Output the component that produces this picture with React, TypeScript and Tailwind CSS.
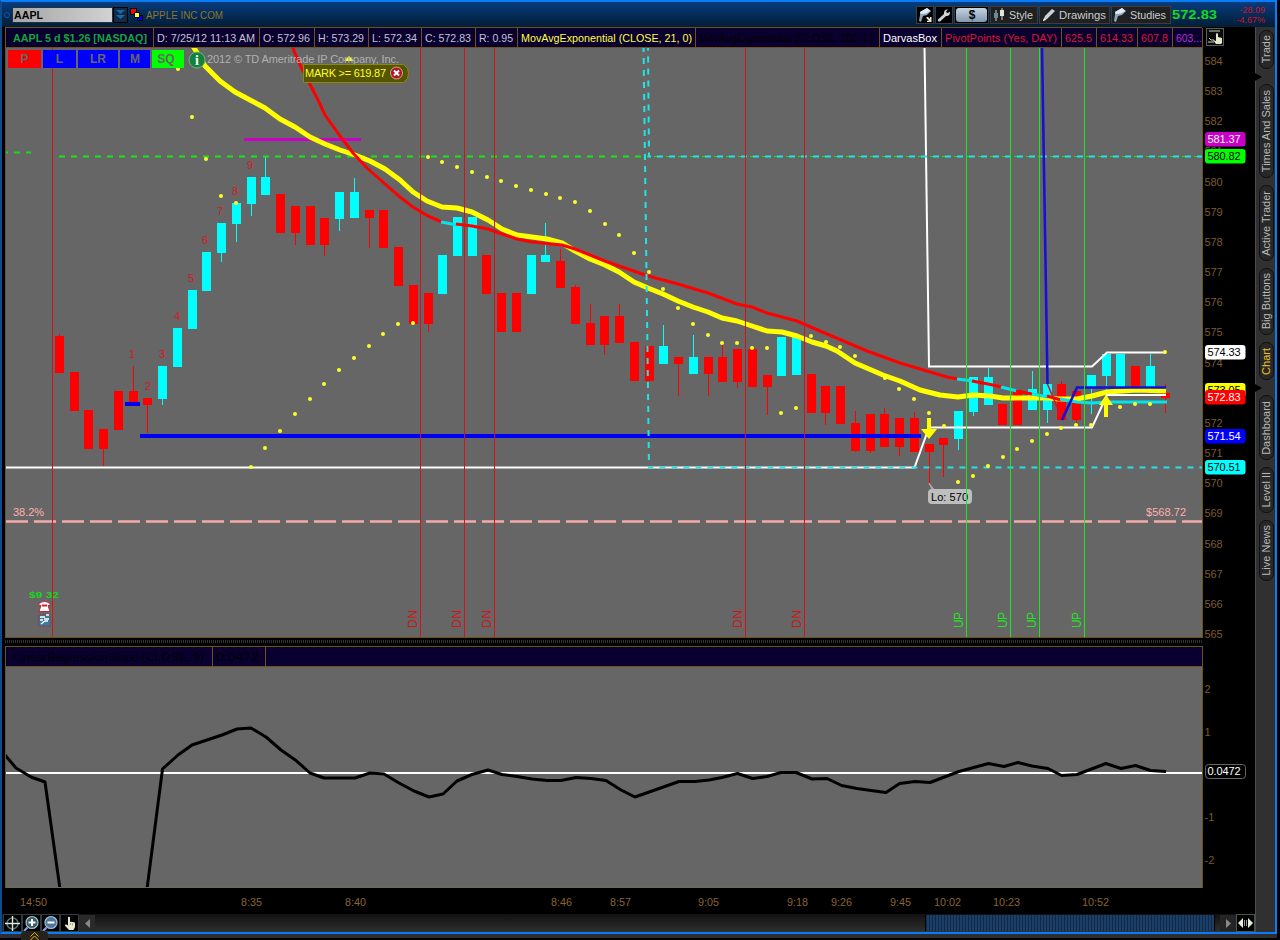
import type { ReactNode } from 'react';

type Point = [number, number];
// [direction, open/close top, open/close bottom, high, low]
type Candle = ['u' | 'd', number, number, number?, number?];

const CANDLES: Candle[] = [
  ['d', 336, 373, 334], ['d', 372, 411], ['d', 410, 449], ['d', 429, 449, 429, 466], ['d', 391, 430],
  ['d', 391, 402, 366], ['d', 398, 405, 398, 433], ['u', 366, 399, 366, 405], ['u', 328, 367], ['u', 290, 329],
  ['u', 252, 291], ['u', 223, 253, 223, 262], ['u', 203, 224, 203, 242], ['u', 177, 204, 177, 216], ['u', 177, 195, 157],
  ['d', 194, 233], ['d', 206, 233, 206, 245], ['d', 206, 245], ['d', 218, 245, 218, 256], ['u', 192, 219, 192, 231],
  ['u', 192, 218, 178], ['d', 210, 218, 210, 248], ['d', 210, 248], ['d', 247, 286], ['d', 285, 324],
  ['d', 293, 324, 293, 332], ['u', 255, 294], ['u', 217, 256], ['u', 217, 256], ['d', 255, 294],
  ['d', 293, 332], ['d', 293, 332], ['u', 255, 294], ['u', 255, 262, 223], ['d', 261, 288, 249],
  ['d', 287, 324, 285], ['d', 323, 345, 304], ['d', 316, 345, 316, 355], ['d', 316, 343, 304], ['d', 342, 381],
  ['d', 346, 381], ['u', 346, 364, 325], ['d', 357, 364, 357, 396], ['u', 357, 374, 335], ['d', 357, 374, 357, 396],
  ['d', 357, 382, 345], ['d', 349, 382, 349, 388], ['d', 349, 387], ['d', 375, 387, 375, 415], ['u', 337, 376],
  ['u', 337, 375], ['d', 374, 413], ['d', 386, 413, 386, 425], ['d', 386, 424], ['d', 423, 451, 411, 452],
  ['d', 414, 451, 414, 453], ['d', 414, 447, 408], ['d', 418, 447, 418, 456], ['d', 418, 452, 412], ['d', 444, 452, 444, 483],
  ['d', 438, 445, 438, 477], ['u', 411, 439, 411, 450], ['u', 377, 412, 377, 416], ['u', 377, 405, 368], ['d', 404, 425],
  ['d', 390, 425], ['u', 389, 410, 371], ['u', 384, 410, 384, 423], ['d', 384, 420, 381], ['d', 391, 420, 391, 423],
  ['u', 375, 387, 375, 414], ['u', 354, 376, 354, 395], ['u', 354, 387], ['d', 366, 387], ['u', 366, 387, 354],
  ['d', 393, 398, 384, 413],
];

const EMA_FAST: Point[] = [
  [193, 46], [205, 66], [220, 81], [235, 92], [250, 100], [265, 108], [280, 119], [295, 127], [310, 137], [325, 144],
  [340, 150], [355, 155], [370, 161], [385, 169], [400, 180], [413, 192], [427, 201], [442, 207], [457, 208], [472, 212],
  [488, 220], [502, 229], [517, 235], [547, 239], [562, 243], [575, 251], [590, 259], [605, 265], [619, 272], [634, 282],
  [648, 288], [663, 294], [678, 301], [693, 307], [708, 312], [722, 318], [737, 321], [752, 326], [767, 331], [782, 332],
  [797, 336], [812, 342], [826, 346], [837, 351], [855, 363], [883, 375], [900, 381], [920, 390], [940, 395], [958, 397],
  [973, 395], [990, 396], [1003, 398], [1033, 398], [1047, 398], [1060, 399], [1077, 399], [1092, 396], [1107, 392],
  [1137, 390], [1166, 391],
];

const EMA_SLOW: { color: string; points: Point[] }[] = [
  { color: '#f00', points: [[292, 46], [300, 65], [318, 100], [325, 115], [340, 136], [353, 153], [367, 168], [385, 184], [400, 197], [413, 207], [428, 216], [442, 222]] },
  { color: '#00e6ee', points: [[441, 222], [457, 225]] },
  { color: '#f00', points: [[456, 224], [472, 226], [488, 229], [502, 234], [517, 239], [532, 242], [562, 245], [575, 249], [605, 261], [619, 266], [648, 276], [678, 284], [708, 293], [737, 304], [752, 307], [767, 313], [797, 321], [820, 331], [867, 351], [900, 363], [947, 377], [958, 379]] },
  { color: '#00e6ee', points: [[957, 379], [973, 381]] },
  { color: '#f00', points: [[972, 381], [988, 384], [1002, 387]] },
  { color: '#00e6ee', points: [[1001, 387], [1017, 391]] },
  { color: '#f00', points: [[1016, 391], [1032, 394]] },
  { color: '#00e6ee', points: [[1032, 394], [1048, 397]] },
  { color: '#f00', points: [[1047, 396], [1061, 400]] },
  { color: '#00e6ee', points: [[1060, 399], [1077, 402], [1092, 403], [1107, 402], [1167, 402]] },
];

const SAR: Point[] = [
  [178, 69], [192, 117], [206, 159], [221, 196], [236, 203], [251, 467], [265, 448], [280, 431], [295, 414], [310, 399],
  [324, 384], [339, 370], [354, 358], [369, 346], [383, 334], [398, 324], [413, 323], [428, 157], [442, 162], [457, 167],
  [472, 172], [487, 177], [501, 181], [516, 186], [531, 190], [546, 194], [560, 198], [575, 202], [590, 211], [605, 224],
  [619, 235], [634, 253], [649, 272], [663, 289], [678, 308], [693, 324], [708, 335], [722, 343], [737, 343], [752, 348],
  [767, 348], [781, 413], [796, 408], [811, 336], [826, 342], [840, 347], [855, 356], [885, 378], [899, 389], [914, 399],
  [929, 413], [944, 426], [958, 482], [973, 476], [988, 466], [1003, 457], [1017, 449], [1032, 441], [1047, 434],
  [1061, 428], [1076, 425], [1091, 425], [1120, 407], [1135, 404], [1150, 404], [1165, 352],
];

const COUNTS: Point[] = [[132, 354], [148, 386], [162, 354], [177, 316], [191, 278], [205, 240], [220, 211], [235, 191], [250, 165]];

const OSCILLATOR: Point[] = [
  [5, 755], [16, 768], [31, 777], [45, 782], [60, 889], [147, 889], [162.5, 769], [178, 755], [192, 745], [207, 740],
  [222, 735], [237, 729], [251, 728], [266, 737], [281, 750], [296, 760.5], [310, 773], [324, 778], [355, 778], [370, 773],
  [384, 774], [399, 783], [414, 791], [429, 797], [443, 794], [457, 781], [472, 774.5], [488, 770], [502, 774.5], [517, 776.5],
  [532, 779], [547, 780.5], [561, 780.5], [576, 777.5], [591, 778.5], [606, 780.5], [621, 790], [635, 797], [679, 781.5],
  [695, 781.5], [709, 780], [722, 777.5], [737.5, 773.5], [752.6, 778.5], [767, 776.5], [781, 772.5], [796, 772.5],
  [812, 779], [827, 778.5], [841.6, 785.5], [857, 788.5], [871, 790.5], [886, 792.5], [899.6, 783.5], [915, 781.5],
  [930, 782.5], [959, 771.5], [988.5, 763.5], [1004, 766.5], [1018, 762.5], [1032, 766], [1048, 768.5], [1061.6, 775.5],
  [1077, 774.5], [1106, 763.5], [1121, 768.5], [1135.5, 765.5], [1150.6, 770.5], [1166, 771.5],
];

const DOWN_LINES = [420.5, 464.5, 494.5, 745.5, 804.5];
const UP_LINES = [966.5, 1010.5, 1039.5, 1084.5];

const INFO_CELLS = [
  { text: 'AAPL 5 d $1.26 [NASDAQ]', className: 'w-[148px] pl-[7px] font-bold text-[#12a53c]', length: 134 },
  { text: 'D: 7/25/12 11:13 AM', className: 'w-[106px] text-[#c3c3d6]', length: 98 },
  { text: 'O: 572.96', className: 'w-[55px] text-[#c3c3d6]', length: 47 },
  { text: 'H: 573.29', className: 'w-[54px] text-[#c3c3d6]', length: 46 },
  { text: 'L: 572.34', className: 'w-[53px] text-[#c3c3d6]', length: 45 },
  { text: 'C: 572.83', className: 'w-[54px] text-[#c3c3d6]', length: 46 },
  { text: 'R: 0.95', className: 'w-[42px] text-[#c3c3d6]', length: 34 },
  { text: 'MovAvgExponential (CLOSE, 21, 0)', className: 'w-[178px] text-[#ffff3c]', length: 171 },
  { text: 'MovAvgExponential (CLOSE, 200, 0)', className: 'w-[184px] text-black', length: 174 },
  { text: 'DarvasBox', className: 'w-[62px] text-white', length: 54 },
  { text: 'PivotPoints (Yes, DAY)', className: 'w-[120px] text-[#d6182f]', length: 112 },
  { text: '625.5', className: 'w-[35px] text-[#d6182f]', length: 27 },
  { text: '614.33', className: 'w-[41px] text-[#d6182f]', length: 33 },
  { text: '607.8', className: 'w-[35px] text-[#d6182f]', length: 27 },
  { text: '603...', className: 'w-[30px] text-[#b32fd0]', length: 26 },
];

const PRICE_TAGS = [
  { y: 139, text: '581.37', fill: '#c800c8', color: '#fff' },
  { y: 156, text: '580.82', fill: '#00ff00', color: '#000' },
  { y: 352, text: '574.33', fill: '#fff', color: '#000' },
  { y: 390, text: '573.05', fill: '#ffff00', color: '#000' },
  { y: 397, text: '572.83', fill: '#ff0000', color: '#fff' },
  { y: 436, text: '571.54', fill: '#0000ff', color: '#fff' },
  { y: 467, text: '570.51', fill: '#00ffff', color: '#000' },
];

const TIMES: { x: number; text: string }[] = [
  { x: 20, text: '14:50' }, { x: 241, text: '8:35' }, { x: 345, text: '8:40' }, { x: 551, text: '8:46' }, { x: 610, text: '8:57' },
  { x: 698, text: '9:05' }, { x: 787, text: '9:18' }, { x: 831, text: '9:26' }, { x: 890, text: '9:45' }, { x: 934, text: '10:02' },
  { x: 993, text: '10:23' }, { x: 1082, text: '10:52' },
];

const SIDE_TABS = [
  { label: 'Trade', className: 'mt-[3px] h-[39px] text-[#b9b9b9]' },
  { label: 'Times And Sales', className: 'mt-[15px] h-[94px] text-[#b9b9b9]' },
  { label: 'Active Trader', className: 'mt-[7px] h-[76px] text-[#b9b9b9]' },
  { label: 'Big Buttons', className: 'mt-[7px] h-[67px] text-[#b9b9b9]' },
  { label: 'Chart', className: 'mt-[7px] h-[38px] text-[#f0c020]' },
  { label: 'Dashboard', className: 'mt-[15px] h-[65px] text-[#b9b9b9]' },
  { label: 'Level II', className: 'mt-[7px] h-[46px] text-[#b9b9b9]' },
  { label: 'Live News', className: 'mt-[7px] h-[61px] text-[#b9b9b9]' },
];

const toPoints = (points: Point[]) => points.map((p) => p.join(',')).join(' ');

// Single line of text that always takes the given width
const FitText = ({ text, length }: { text: string; length: number }) => (
  <svg width={length} height="14" className="block shrink-0 overflow-visible">
    <text x="0" y="11" textLength={length} lengthAdjust="spacingAndGlyphs" fill="currentColor">{text}</text>
  </svg>
);

const FunnelIcon = ({ arrow }: { arrow?: boolean }) => (
  <svg width="14" height="16" viewBox="0 0 14 16">
    <path d="M2 5L9 1l4 3-4 4-4 1-2 6-2-1 1-6z" fill="#8fa6bc" />
    <path d="M2 5L9 1l3.500 3L8 6.500 3 7z" fill="#dfeaf5" />
    {arrow && <path d="M8.500 10l1.500 0 2 2v-2h1.500v5H9v-1.200h2l-2.500-2.500z" fill="#e8e8d8" />}
  </svg>
);

const HandIcon = () => (
  <svg width="14" height="15" viewBox="0 0 14 15">
    <path d="M5 1.500c0-1 2-1 2 0V6l1-.6 1 .8 1-.4 1 .8 1-.2v4.500L10.500 14H6L1.800 9.500l1-1.200L5 9.500z" fill="#e6e8cf" />
    <path d="M7.500 7v2M9.500 7.500v2" stroke="#777" strokeWidth=".6" />
  </svg>
);

const MagnifierIcon = ({ plus }: { plus?: boolean }) => (
  <svg width="17" height="17" viewBox="0 0 17 17">
    <path d="M1 16l3.500-3.500" stroke="#8d9ce8" strokeWidth="2.200" />
    <circle cx="9" cy="7.500" r="6" fill={plus ? '#3c5a60' : '#52759c'} stroke="#9ec3d6" strokeWidth="1.200" />
    <path d={plus ? 'M5.500 7.500h7M9 4v7' : 'M5.500 7.500h7'} stroke="#fff" strokeWidth="2" />
  </svg>
);

const ToolButton = ({ className, children }: { className: string; children: ReactNode }) => (
  <div className={`flex h-[18px] items-center overflow-hidden border border-[#3c3c3c] text-[11px] text-[#c9cdd2] ${className}`}>
    {children}
  </div>
);

const Header = () => (
  <div className="flex h-[25px] items-center bg-gradient-to-b from-[#073c7e] to-[#031d37] pl-[2px]">
    <div className="mr-[2px] h-[6px] w-[6px] rounded-full border border-[#0759a8]" />
    <div className="flex h-[16px] w-[101px] items-center border border-[#18324b] bg-gradient-to-r from-[#a5a5a5] to-[#d2d2d2] pl-[1px] text-[11px] font-bold text-black">
      <FitText text="AAPL" length={29} />
    </div>
    <div className="flex h-[16px] w-[15px] items-center justify-center border border-black bg-[#142942]">
      <svg width="9" height="11" viewBox="0 0 9 11"><path d="M0 1h9L4.500 5zM0 6h9L4.500 10z" fill="#1769af" /></svg>
    </div>
    <svg width="14" height="14" viewBox="0 0 14 14" className="ml-[2px]">
      <path d="M.5.5h6v6h-6z" fill="#f00" stroke="#000" />
      <path d="M7.500 7.500h5v5h-5z" fill="#00f" stroke="#000" />
      <path d="M4.500 4.500h5v5h-5z" fill="#ff4" stroke="#000" />
    </svg>
    <div className="ml-[2px] text-[11px] text-[#8e7426]"><FitText text="APPLE INC COM" length={77} /></div>
    <div className="ml-auto flex items-center gap-[1px]">
      <ToolButton className="w-[18px] justify-center bg-black"><FunnelIcon arrow /></ToolButton>
      <ToolButton className="w-[18px] justify-center bg-black">
        <svg width="14" height="14" viewBox="0 0 14 14">
          <path d="M1 11.500l6-5.500c-.5-3 1.500-5 4-4.500L9 3.500l1 1.500 2-.5 1-1c.5 3-1.500 5-4 4.500l-6 5.500c-1.500.5-2.500-1-2-1.500z" fill="#cfd4d8" />
        </svg>
      </ToolButton>
      <ToolButton className="w-[35px] justify-center bg-black">
        <span className="flex h-[14px] w-[31px] items-center justify-center rounded-[3px] bg-gradient-to-b from-[#c4d3e2] to-[#8399b0] text-[12px] font-bold text-black">$</span>
      </ToolButton>
      <ToolButton className="w-[48px] gap-[4px] bg-[#202021] pl-[2px]">
        <svg width="12" height="14" viewBox="0 0 12 14">
          <path d="M3 2v11M9 0v12" stroke="#c8d8cd" />
          <path d="M1 5h4v5H1z" fill="#688b9c" /><path d="M7 2h4v6H7z" fill="#e0e8d8" />
        </svg>
        <FitText text="Style" length={24} />
      </ToolButton>
      <ToolButton className="w-[71px] gap-[3px] bg-[#202021] pl-[2px]">
        <svg width="14" height="14" viewBox="0 0 14 14"><path d="M1 13l2-5 7-7 3 2-8 8z" fill="#c7d4df" /><path d="M1 13l1-3 2 2z" fill="#f5f5f5" /></svg>
        <FitText text="Drawings" length={47} />
      </ToolButton>
      <ToolButton className="w-[60px] gap-[3px] bg-[#202021] pl-[1px]">
        <FunnelIcon />
        <FitText text="Studies" length={36} />
      </ToolButton>
    </div>
    <div className="ml-[1px] text-[13px] font-bold text-[#12d922]"><FitText text="572.83" length={45} /></div>
    <div className="mr-[10px] ml-[19px] flex flex-col items-end text-[9px] leading-[10px] text-[#d41020]">
      <span>-28.09</span>
      <span>-4.67%</span>
    </div>
  </div>
);

const InfoRow = () => (
  <div className="flex h-[21px] border-y border-[#6f5419] bg-[#0a0030] text-[11px]">
    {INFO_CELLS.map((cell) => (
      <div key={cell.text} className={`flex shrink-0 items-center overflow-hidden border-r border-[#6f5419] pl-[3px] ${cell.className}`}>
        <FitText text={cell.text} length={cell.length} />
      </div>
    ))}
  </div>
);

const PriceChart = () => (
  <svg width="1196" height="589" viewBox="6 48 1196 589" className="block bg-[#666666]" fontSize="11">
    {CANDLES.map(([dir, top, bottom, high = top, low = bottom], i) => {
      const x = Math.floor(59.5 + i * 14.74);
      return (
        <g key={i} fill={dir === 'u' ? '#00ffff' : '#ff0000'}>
          <rect x={x} y={high} width="1" height={low - high} />
          <rect x={x - 4} y={top} width="9" height={bottom - top} />
        </g>
      );
    })}

    {/* Pivot levels */}
    <path d="M6 152.500h25" stroke="#14dc14" strokeWidth="2" strokeDasharray="6 6" strokeDashoffset="4" />
    <path d="M59 156.500H648" stroke="#14e614" strokeWidth="2" strokeDasharray="6 6" />
    <path d="M654 156.500H1202" stroke="#14e614" strokeWidth="1" strokeDasharray="6 6" />
    <path d="M244 139.500h117" stroke="#c800c8" strokeWidth="3" />
    <path d="M125 404h15" stroke="#0000ee" strokeWidth="4" />
    <path d="M140 436h781" stroke="#0000f5" strokeWidth="4" />

    {/* Fibonacci retracement */}
    <path d="M6 521.500H1202" stroke="#f5aaaa" strokeWidth="2.500" strokeDasharray="22 6" />
    <text x="13" y="516" fill="#ffb0b0" textLength="31">38.2%</text>
    <text x="1146" y="516" fill="#ffb0b0" textLength="40">$568.72</text>

    {/* Moving averages */}
    <polyline points={toPoints(EMA_FAST)} fill="none" stroke="#ffff00" strokeWidth="5" strokeLinejoin="round" />
    {EMA_SLOW.map((part, i) => (
      <polyline key={i} points={toPoints(part.points)} fill="none" stroke={part.color} strokeWidth="3" strokeLinejoin="round" />
    ))}

    {/* Darvas box */}
    <g fill="none" stroke="#fff" strokeWidth="2">
      <path d="M6 467.500H914.500L929 427.500H1092L1107 395H1166" />
      <path d="M924.500 46L929 366.500H1092L1107 352.500H1166" />
    </g>
    <g fill="none" stroke="#1ee6e6" strokeWidth="2" strokeDasharray="6 6">
      <path d="M643.500 46L649 467.500H1202" />
      <path d="M648 44.500L649 156.500H1202" />
    </g>
    <path d="M1047 383L1062 419" stroke="#e01020" strokeWidth="1.500" />
    <path d="M1042 46L1047.500 384M1062 420L1077 387.500H1166" fill="none" stroke="#1010d8" strokeWidth="2.500" />

    {SAR.map(([x, y]) => <circle key={`${x}-${y}`} cx={x} cy={y} r="2" fill="#ffff28" />)}

    {/* Signals */}
    <path d="M927 418h4v11h6l-8 10-8-10h6zM1104 417h4v-12h5l-7-10-7 10h5z" fill="#ffff00" />
    <path d="M344 61l5-5 5 5z" fill="#ff0" />
    <g fill="#d81822">
      {COUNTS.map(([x, y], i) => <text key={i} x={x} y={y + 4} textAnchor="middle">{i + 1}</text>)}
    </g>

    {/* Low of the day */}
    <path d="M929 483l7 9h-3z" fill="#aaa" stroke="#aaa" />
    <rect x="928" y="489" width="44" height="15" rx="4" fill="#bebebe" />
    <text x="931" y="501" fill="#000" textLength="37">Lo: 570</text>

    {/* Earnings marker */}
    <text x="29" y="598" fill="#14d81e" fontSize="9" fontWeight="bold" textLength="30" lengthAdjust="spacingAndGlyphs">$9 32</text>
    <path d="M39 605.500v-2q5.500-4 11 0v2h-2l2 6H39l2-6z" fill="#fff" stroke="#d02030" />
    <path d="M42 604.500h5v2h-5z" fill="#d02030" />
    <path d="M39 615h11v11H39z" fill="#3a7c9c" stroke="#a02a3c" strokeWidth=".6" />
    <path d="M40 617h5M46 615h3M40 620h3M44 619h5M41 624l4-3h3" stroke="#fff" strokeWidth="1.300" fill="none" />

    <path d="M52.500 48V637" stroke="#d01418" />
    {DOWN_LINES.map((x) => (
      <g key={x}>
        <path d={`M${x} 48V637`} stroke="#d01418" />
        <text transform={`translate(${x - 4} 628) rotate(-90)`} fill="#d01418" fontSize="12" textLength="18">DN</text>
      </g>
    ))}
    {UP_LINES.map((x) => (
      <g key={x}>
        <path d={`M${x} 48V637`} stroke="#1ee61e" />
        <text transform={`translate(${x - 4} 628) rotate(-90)`} fill="#1ee61e" fontSize="12" textLength="16">UP</text>
      </g>
    ))}

    <text x="207" y="63" fill="#b0b0b0" textLength="192">2012 © TD Ameritrade IP Company, Inc.</text>
    <circle cx="197" cy="60" r="8" fill="#14823c" stroke="#6ab482" />
    <text x="197" y="65" fill="#fff" fontFamily="Liberation Serif, serif" fontSize="14" fontWeight="bold" textAnchor="middle">i</text>
  </svg>
);

const ChartOverlay = () => (
  <>
    <div className="absolute top-[2px] left-[2px] flex gap-[2px] text-[12px] leading-[18px] font-bold text-[#666]">
      <div className="h-[18px] w-[33px] bg-[#ff0000] text-center">P</div>
      <div className="h-[18px] w-[33px] bg-[#0000ff] text-center">L</div>
      <div className="h-[18px] w-[40px] bg-[#0000ff] text-center">LR</div>
      <div className="h-[18px] w-[30px] bg-[#0000ff] text-center">M</div>
      <div className="h-[18px] w-[32px] bg-[#00ff00] pr-[4px] text-center">SQ</div>
    </div>
    <svg width="107" height="19" viewBox="302 64 107 19" className="absolute top-[16px] left-[296px]" fontSize="11">
      <path d="M303.500 64.500h100l4 4 1 5-1 5-4 4h-100z" fill="#555500" stroke="#8a8a10" />
      <text x="305" y="77" fill="#ffff28" textLength="81">MARK &gt;= 619.87</text>
      <circle cx="396.500" cy="73" r="6" fill="#b4141e" stroke="#ddd" strokeWidth=".7" />
      <path d="M394 70.500l5 5m0-5l-5 5" stroke="#fff" strokeWidth="2" />
    </svg>
  </>
);

const PriceAxis = () => (
  <svg width="53" height="610" viewBox="1202 27 53 610" className="block shrink-0 overflow-visible" fontSize="11">
    <path d="M1202.500 47V637" stroke="#6f5419" />
    <rect x="1206.500" y="28.500" width="17" height="17" fill="#0c0c0c" stroke="#55625a" />
    <path d="M1209 31h11M1208 42h6M1209 38l2 2h3" stroke="#c9cdb8" fill="none" />
    <path d="M1216 34c0-1 2-1 2 0v3l4 1v5l-1 1h-5l-3-4 3 1z" fill="#e6e8cf" />
    {Array.from({ length: 20 }, (_, i) => (
      <text key={i} x="1204.500" y={65 + i * 30.16} fill="#7a5a32" textLength="18">{584 - i}</text>
    ))}
    {PRICE_TAGS.map((tag) => (
      <g key={tag.text}>
        <rect x="1205" y={tag.y - 7} width="40.500" height="14.500" rx="3" fill={tag.fill} />
        <text x="1207.500" y={tag.y + 4} fill={tag.color} textLength="33">{tag.text}</text>
      </g>
    ))}
  </svg>
);

const StudyPanel = () => (
  <div className="flex">
    <div className="w-[1198px] border-x border-[#6f5419]">
      <div className="flex h-[21px] border-y border-[#6f5419] bg-[#0a0030] text-[11px] text-black">
        <div className="flex w-[207px] items-center overflow-hidden border-r border-[#6f5419] pl-[8px]">
          <FitText text="LinearRegressionSlope (CLOSE, 9)" length={190} />
        </div>
        <div className="flex w-[53px] items-center overflow-hidden border-r border-[#6f5419] pl-[3px]">
          <FitText text="0.0472" length={43} />
        </div>
      </div>
      <svg width="1196" height="220" viewBox="6 667 1196 220" className="block bg-[#666666]">
        <path d="M6 773H1202" stroke="#fff" strokeWidth="2" />
        <polyline points={toPoints(OSCILLATOR)} fill="none" stroke="#000" strokeWidth="3" strokeLinejoin="round" />
      </svg>
      <div className="h-[1px] bg-[#6f6a4a]" />
    </div>
    <svg width="52" height="242" viewBox="1203 646 52 242" className="block shrink-0" fontSize="11">
      <g fill="#7a5a32">
        <text x="1204.500" y="693">2</text>
        <text x="1204.500" y="736">1</text>
        <text x="1204.500" y="821">-1</text>
        <text x="1204.500" y="864">-2</text>
      </g>
      <rect x="1205.500" y="764.500" width="40" height="14" rx="3" fill="#000" stroke="#666" />
      <text x="1207.500" y="775" fill="#fff" textLength="33">0.0472</text>
    </svg>
  </div>
);

const BottomBar = () => (
  <div className="flex h-[18px] items-center bg-gradient-to-b from-[#111] to-[#303030] pl-[1px]">
    <div className="flex h-full w-[19px] items-center justify-center border border-[#333b42] bg-black">
      <svg width="15" height="15" viewBox="0 0 15 15" fill="none">
        <circle cx="7.500" cy="7.500" r="5.500" stroke="#53706e" strokeWidth="1.500" />
        <path d="M7.500 0v15M0 7.500h15" stroke="#dfe9e0" strokeWidth="1.400" />
      </svg>
    </div>
    <div className="flex h-full w-[19px] items-center justify-center border border-[#333b42] bg-black"><MagnifierIcon plus /></div>
    <div className="flex h-full w-[19px] items-center justify-center border border-[#333b42] bg-black"><MagnifierIcon /></div>
    <div className="flex h-full w-[19px] items-center justify-center border border-[#333b42] bg-black"><HandIcon /></div>
    <div className="flex h-[16px] w-[16px] items-center justify-center bg-[#2a2a2a]">
      <svg width="5" height="9" viewBox="0 0 5 9"><path d="M5 0v9L0 4.500z" fill="#888" /></svg>
    </div>
    <div className="ml-auto h-[16px] w-[290px] border-x border-black bg-[#17365a] bg-[repeating-linear-gradient(90deg,#102947_0_1px,#1b3f68_1px_3px)]" />
    <div className="ml-[5px] flex h-[16px] w-[16px] items-center justify-center bg-[#242424]">
      <svg width="5" height="9" viewBox="0 0 5 9"><path d="M0 0v9l5-4.500z" fill="#888" /></svg>
    </div>
    <div className="flex h-full w-[19px] items-center justify-center border border-[#49534f] bg-black">
      <svg width="15" height="10" viewBox="0 0 15 10">
        <path d="M5 0v10L0 5zM10 0v10l5-5z" fill="#e8f0dc" />
        <path d="M6.500 2v6M8.500 2v6" stroke="#8d968c" />
      </svg>
    </div>
  </div>
);

const SideTabs = () => (
  <div className="relative flex w-[20px] flex-col items-end border-l border-[#4c4c4c] bg-[#303030] pr-[1px]">
    {SIDE_TABS.map((tab) => (
      <div
        key={tab.label}
        className={`flex w-[15px] shrink-0 items-center justify-center rounded-[7px] border border-[#111] bg-[#282828] text-[11px] ${tab.className}`}
      >
        <span className="rotate-180 whitespace-nowrap [writing-mode:vertical-rl]">{tab.label}</span>
      </div>
    ))}
    <svg width="7" height="8" className="absolute top-[46px] left-[-1px]"><path d="M0 0l7 4-7 4z" fill="#000" /></svg>
    <svg width="7" height="8" className="absolute top-[357px] left-[-1px]"><path d="M0 0l7 4-7 4z" fill="#000" /></svg>
  </div>
);

export default function App() {
  return (
    <div className="flex h-[940px] w-[1280px] flex-col overflow-hidden bg-black font-['Liberation_Sans',Arial,sans-serif]">
      <div className="flex h-[934px] w-[1277px] flex-col border-t-2 border-r-2 border-b-2 border-l-2 border-[#0a7cf5] border-l-[#0b4b8e]">
        <Header />
        <div className="flex min-h-0 flex-1">
          <div className="flex w-[1253px] flex-col">
            <div className="flex pl-[3px]">
              <div className="w-[1197px] border-l border-[#6f5419]">
                <InfoRow />
                <div className="relative">
                  <PriceChart />
                  <ChartOverlay />
                </div>
              </div>
              <PriceAxis />
            </div>
            <div className="h-[9px] pl-[3px]">
              <div className="h-[1px] w-[1198px] bg-[#6f5419]" />
              <div className="mt-[2px] h-[3px] w-[1198px] bg-[repeating-linear-gradient(90deg,#333_0_1px,#000_1px_2px)]" />
            </div>
            <div className="pl-[3px]">
              <StudyPanel />
            </div>
            {/* Each label sits at the time of its bar */}
            <div className="relative h-[26px] text-[11px] text-[#8a6432]">
              {TIMES.map((time) => (
                <div key={time.text} className="absolute top-[7px]" style={{ left: time.x - 2 }}>
                  <FitText text={time.text} length={time.text.length > 4 ? 27 : 21} />
                </div>
              ))}
            </div>
            <BottomBar />
          </div>
          <SideTabs />
        </div>
      </div>
      <div className="h-[4px] w-[1277px] bg-[#2e2e30] pl-[21px]">
        <div className="relative top-[-3px] flex h-[9px] w-[27px] items-end justify-center rounded-t bg-[#25221c]">
          <svg width="9" height="8" viewBox="0 0 9 8" fill="none" stroke="#e8b400"><path d="M.5 4.500l4-4 4 4M.5 8l4-4 4 4" /></svg>
        </div>
      </div>
    </div>
  );
}
